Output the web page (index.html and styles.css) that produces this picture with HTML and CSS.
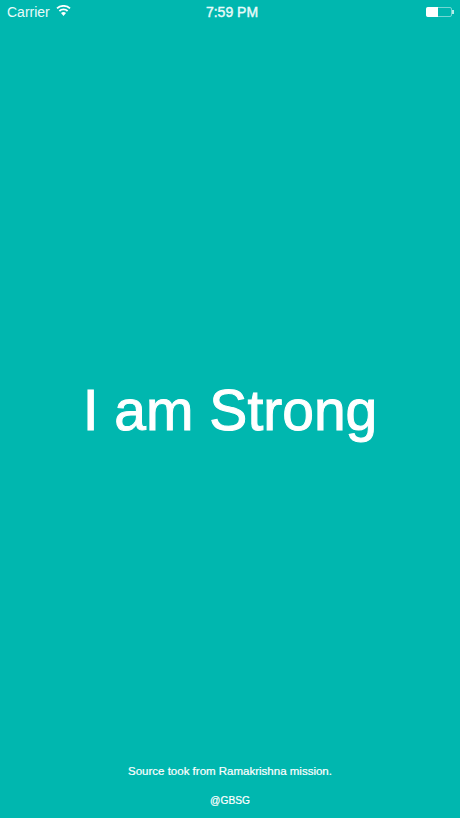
FILE: index.html
```html
<!DOCTYPE html>
<html lang="en">
<head>
    <meta charset="UTF-8">
    <meta name="viewport" content="width=device-width, initial-scale=1.0">
    <title>I am Strong</title>
    <link rel="stylesheet" href="styles.css">
</head>
<body>
    <div class="screen">
        <div class="status-bar">
            <div class="status-left">
                <span>Carrier</span>
                <svg class="wifi" width="15" height="11" viewBox="0 0 15 11">
                    <path d="M7.5 11 L5 8 A3.8 3.8 0 0 1 10 8 Z" fill="#fff"/>
                    <path d="M3.4 6 A6 6 0 0 1 11.6 6" fill="none" stroke="#fff" stroke-width="1.8"/>
                    <path d="M1 3.4 A9.6 9.6 0 0 1 14 3.4" fill="none" stroke="#fff" stroke-width="1.8"/>
                </svg>
            </div>
            <div class="status-time">7:59 PM</div>
            <div class="status-right">
                <div class="battery"><div class="battery-level"></div></div>
                <div class="battery-tip"></div>
            </div>
        </div>
        <main class="title-area">
            <h1>I am Strong</h1>
        </main>
        <footer class="credits">
            <p class="source">Source took from Ramakrishna mission.</p>
            <p class="handle">@GBSG</p>
        </footer>
    </div>
</body>
</html>
```

FILE: styles.css
```css
body {
    margin: 0;
    font-family: "Liberation Sans", Arial, sans-serif;
    color: #fff;
    background-color: #00b7af;
}

.screen {
    width: 460px;
    height: 818px;
    display: flex;
    flex-direction: column;
    overflow: hidden;
}

/* status bar */
.status-bar {
    height: 24px;
    padding: 0 6px 0 7px;
    display: flex;
    align-items: center;
    justify-content: space-between;
    font-size: 14px;
    color: #e8fbfa;
}

.status-left {
    width: 150px;
    display: flex;
    align-items: center;
    gap: 6px;
}

.wifi {
    margin-top: -4px;
}

.status-time {
    margin-left: 3px;
    font-size: 14px;
    -webkit-text-stroke: 0.4px #e8fbfa;
}

.status-right {
    width: 150px;
    margin-top: -1px;
    display: flex;
    align-items: center;
    justify-content: flex-end;
}

.battery {
    width: 26px;
    height: 10px;
    box-sizing: border-box;
    border: 1px solid rgba(255, 255, 255, 0.45);
    border-radius: 2px;
}

.battery-level {
    width: 12px;
    height: 10px;
    margin: -1px 0 0 -1px;
    border-radius: 2px 0 0 2px;
    background-color: #fff;
}

.battery-tip {
    width: 2px;
    height: 4px;
    background-color: #b5eeea;
}

/* title */
.title-area {
    flex: 1;
    display: flex;
    align-items: center;
    justify-content: center;
    padding-top: 32px;
}

h1 {
    margin: 0;
    font-size: 57px;
    font-weight: normal;
    line-height: 64px;
    -webkit-text-stroke: 1px #fff;
}

/* footer */
.credits {
    padding-bottom: 10px;
    text-align: center;
}

.credits p {
    margin: 0;
    line-height: 14px;
}

.source {
    margin-bottom: 16px !important;
    font-size: 11.5px;
    -webkit-text-stroke: 0.2px #fff;
}

.handle {
    font-size: 10.2px;
    -webkit-text-stroke: 0.2px #fff;
}
```
